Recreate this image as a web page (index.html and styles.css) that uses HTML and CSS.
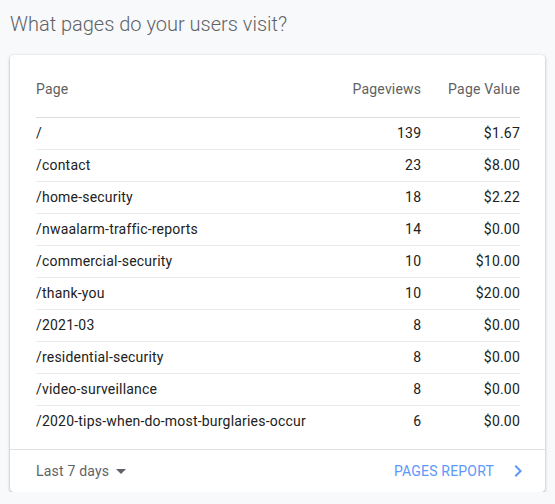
FILE: index.html
```html
<!DOCTYPE html>
<html>
<head>
    <title>What pages do your users visit?</title>
    <link rel="stylesheet" href="styles.css">
</head>
<body>
    <h2 class="title">What pages do your users visit?</h2>
    <div class="card">
        <table class="pages">
            <tr><th class="page">Page</th><th class="num">Pageviews</th><th class="num">Page Value</th></tr>
            <tr><td>/</td><td class="num">139</td><td class="num">$1.67</td></tr>
            <tr><td>/contact</td><td class="num">23</td><td class="num">$8.00</td></tr>
            <tr><td>/home-security</td><td class="num">18</td><td class="num">$2.22</td></tr>
            <tr><td>/nwaalarm-traffic-reports</td><td class="num">14</td><td class="num">$0.00</td></tr>
            <tr><td>/commercial-security</td><td class="num">10</td><td class="num">$10.00</td></tr>
            <tr><td>/thank-you</td><td class="num">10</td><td class="num">$20.00</td></tr>
            <tr><td>/2021-03</td><td class="num">8</td><td class="num">$0.00</td></tr>
            <tr><td>/residential-security</td><td class="num">8</td><td class="num">$0.00</td></tr>
            <tr><td>/video-surveillance</td><td class="num">8</td><td class="num">$0.00</td></tr>
            <tr><td>/2020-tips-when-do-most-burglaries-occur</td><td class="num">6</td><td class="num">$0.00</td></tr>
        </table>
        <div class="card-footer">
            <div class="range">Last 7 days <span class="caret"></span></div>
            <a class="report-link" href="#">PAGES REPORT
                <svg width="24" height="24" viewBox="0 0 24 24"><path d="M8.59 16.59L13.17 12 8.59 7.41 10 6l6 6-6 6z" fill="currentColor"/></svg>
            </a>
        </div>
    </div>
</body>
</html>
```

FILE: styles.css
```css
body {
    margin: 0;
    padding: 0 10px;
    background: #f8f9fa;
    font-family: Roboto, Arial, sans-serif;
    color: #212121;
}
.title {
    margin: 0;
    padding-top: 11px;
    height: 55px;
    box-sizing: border-box;
    font-size: 20px;
    font-weight: 300;
    line-height: 26px;
    color: #5f6368;
}
.card {
    background: #fff;
    border-radius: 4px;
    box-shadow: 0 1px 2px rgba(60,64,67,.3), 0 1px 3px 1px rgba(60,64,67,.12);
    height: 437px;
    box-sizing: border-box;
    padding-top: 14px;
}
.pages {
    width: 484px;
    margin: 0 25px 12px 26px;
    border-collapse: collapse;
    font-size: 14px;
    letter-spacing: .2px;
}
.pages th {
    height: 48px;
    padding: 0 0 20px;
    vertical-align: bottom;
    box-sizing: border-box;
    font-weight: 400;
    line-height: 16px;
    color: #616161;
    text-align: left;
    border-bottom: 1px solid #dadce0;
}
.pages td {
    height: 31px;
    padding: 0;
    line-height: 16px;
    border-bottom: 1px solid #e8eaed;
}
.pages tr:last-child td { border-bottom: 0; }
.pages .num { text-align: right; padding-left: 20px; }
.card-footer {
    border-top: 1px solid #e0e0e0;
    height: 43px;
    display: flex;
    align-items: center;
    justify-content: space-between;
    padding: 0 15px 0 26px;
    font-size: 14px;
    letter-spacing: .2px;
}
.range {
    color: #5f6368;
    display: flex;
    align-items: center;
}
.caret {
    width: 0; height: 0;
    margin-left: 7px;
    border-left: 5px solid transparent;
    border-right: 5px solid transparent;
    border-top: 5px solid #5f6368;
}
.report-link {
    color: #5e97f6;
    text-decoration: none;
    display: flex;
    align-items: center;
    gap: 12px;
}
```
